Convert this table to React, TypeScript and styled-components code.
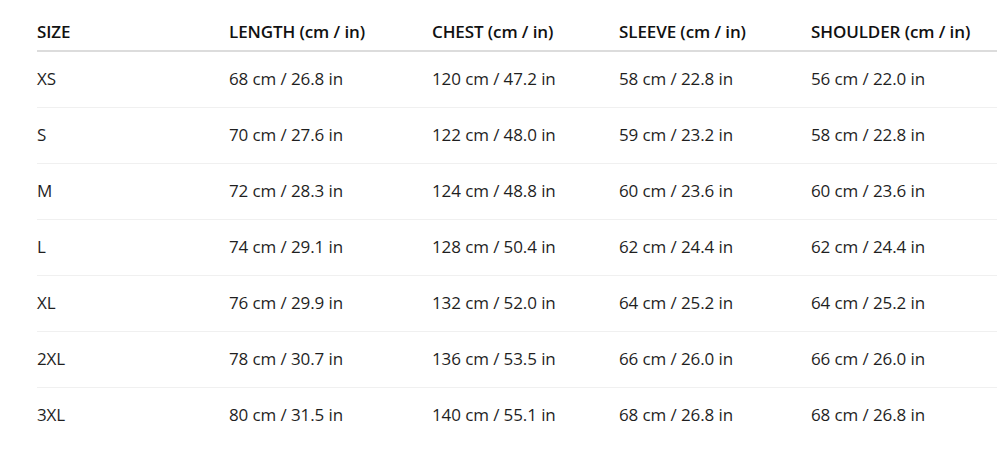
import styled, { createGlobalStyle } from 'styled-components'

const GlobalStyle = createGlobalStyle`
  body {
    margin: 0;
    background: #ffffff;
    font-family: "Open Sans", "Noto Sans", "Liberation Sans", sans-serif;
  }
`

const Page = styled.div`
  padding: 13px 0 0 37px;
`

const Table = styled.div`
  width: 960px;
  display: flex;
  flex-direction: column;
`

const Row = styled.div<{ $head?: boolean; $last?: boolean }>`
  display: grid;
  grid-template-columns: 192px 203px 187px 192px 186px;
  align-items: center;
  box-sizing: border-box;
  height: ${p => (p.$head ? '39px' : '56px')};
  padding-bottom: ${p => (p.$head ? '0' : '1px')};
  border-bottom: ${p =>
    p.$head ? '2px solid #dcdcdc' : p.$last ? '1px solid transparent' : '1px solid #f0f0f0'};
`

const Cell = styled.div<{ $head?: boolean }>`
  font-size: 17px;
  letter-spacing: -0.1px;
  line-height: 24px;
  color: ${p => (p.$head ? '#111111' : '#1f1f1f')};
  font-weight: ${p => (p.$head ? 600 : 400)};
  white-space: nowrap;
`

const headers = ['SIZE', 'LENGTH (cm / in)', 'CHEST (cm / in)', 'SLEEVE (cm / in)', 'SHOULDER (cm / in)']

const rows = [
  ['XS', '68 cm / 26.8 in', '120 cm / 47.2 in', '58 cm / 22.8 in', '56 cm / 22.0 in'],
  ['S', '70 cm / 27.6 in', '122 cm / 48.0 in', '59 cm / 23.2 in', '58 cm / 22.8 in'],
  ['M', '72 cm / 28.3 in', '124 cm / 48.8 in', '60 cm / 23.6 in', '60 cm / 23.6 in'],
  ['L', '74 cm / 29.1 in', '128 cm / 50.4 in', '62 cm / 24.4 in', '62 cm / 24.4 in'],
  ['XL', '76 cm / 29.9 in', '132 cm / 52.0 in', '64 cm / 25.2 in', '64 cm / 25.2 in'],
  ['2XL', '78 cm / 30.7 in', '136 cm / 53.5 in', '66 cm / 26.0 in', '66 cm / 26.0 in'],
  ['3XL', '80 cm / 31.5 in', '140 cm / 55.1 in', '68 cm / 26.8 in', '68 cm / 26.8 in'],
]

function App() {
  return (
    <Page>
      <GlobalStyle />
      <Table>
        <Row $head>
          {headers.map(h => (
            <Cell $head key={h}>{h}</Cell>
          ))}
        </Row>
        {rows.map((r, i) => (
          <Row key={r[0]} $last={i === rows.length - 1}>
            {r.map((c, j) => (
              <Cell key={j}>{c}</Cell>
            ))}
          </Row>
        ))}
      </Table>
    </Page>
  )
}

export default App
